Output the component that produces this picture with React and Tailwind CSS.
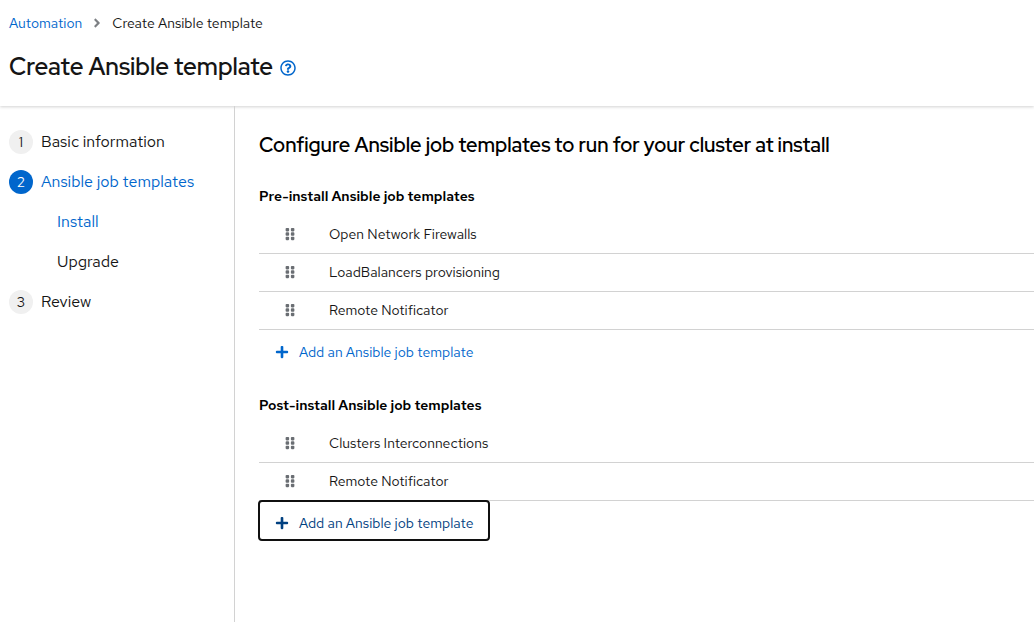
import { FaAngleRight, FaGripVertical, FaPlus, FaRegQuestionCircle } from 'react-icons/fa';

const preInstall = ['Open Network Firewalls', 'LoadBalancers provisioning', 'Remote Notificator'];
const postInstall = ['Clusters Interconnections', 'Remote Notificator'];

function Step({ number, label, current, children }) {
  return (
    <li>
      <button
        type="button"
        aria-current={current ? 'step' : undefined}
        className={`flex items-center gap-2 text-base leading-6 ${current ? 'text-[#0066cc]' : 'text-[#151515]'}`}
      >
        <span
          className={`flex size-6 items-center justify-center rounded-full text-sm ${current ? 'bg-[#0066cc] text-white' : 'bg-[#f0f0f0]'}`}
        >
          {number}
        </span>
        {label}
      </button>
      {children}
    </li>
  );
}

function TemplateSection({ title, items, focused }) {
  return (
    <section>
      <h3 className="text-sm leading-[22px] font-semibold text-black">{title}</h3>
      <ul className="mt-[9px]">
        {items.map((item) => (
          <li key={item} className="flex h-[38px] items-center border-b border-[#d2d2d2] pb-0.5">
            <button type="button" aria-label={`Reorder ${item}`} className="flex w-[70px] pl-6 text-[#6a6e73]">
              <FaGripVertical size={14} />
            </button>
            <span>{item}</span>
          </li>
        ))}
      </ul>
      <button
        type="button"
        className={`flex h-[39px] items-center gap-[10px] rounded-[3px] px-4 pt-1 ${focused ? 'text-[#004080] outline-2 -outline-offset-1 outline-[#101010]' : 'text-[#0066cc]'}`}
      >
        <FaPlus size={14} />
        Add an Ansible job template
      </button>
    </section>
  );
}

export default function App() {
  return (
    <div className="flex min-h-screen flex-col overflow-x-hidden bg-white font-['Red_Hat_Text',Inter,sans-serif] text-sm text-[#151515]">
      <header className="px-[9px] pt-3 pb-[23px] shadow-[0_1px_3px_rgba(3,3,3,0.18)]">
        <nav aria-label="Breadcrumb">
          <ol className="flex items-center leading-[22px]">
            <li><a href="#automation" className="text-[#0066cc]">Automation</a></li>
            <li className="mx-2 flex items-center text-[#7d8084]" aria-hidden="true"><FaAngleRight size={14} /></li>
            <li aria-current="page">Create Ansible template</li>
          </ol>
        </nav>
        <div className="mt-[17px] flex items-center gap-[7px]">
          <h1 className="font-['Red_Hat_Display',Inter,sans-serif] text-2xl leading-8 font-semibold">Create Ansible template</h1>
          <button type="button" aria-label="More information" className="mt-0.5 text-[#0066cc]">
            <FaRegQuestionCircle size={16} />
          </button>
        </div>
      </header>
      <div className="flex flex-1">
        <nav aria-label="Wizard steps" className="w-[235px] shrink-0 border-r border-[#d2d2d2] px-[9px] pt-6">
          <ol className="flex flex-col gap-4">
            <Step number={1} label="Basic information" />
            <Step number={2} label="Ansible job templates" current>
              <ol className="mt-4 flex flex-col gap-4 pl-12 text-base leading-6">
                <li><button type="button" className="block text-[#0066cc]">Install</button></li>
                <li><button type="button" className="block">Upgrade</button></li>
              </ol>
            </Step>
            <Step number={3} label="Review" />
          </ol>
        </nav>
        <main className="min-w-0 flex-1 pt-6 pl-6">
          <h2 className="font-['Red_Hat_Display',Inter,sans-serif] text-xl leading-[30px] font-semibold text-black">Configure Ansible job templates to run for your cluster at install</h2>
          <div className="mt-[25px] flex flex-col gap-[25px]">
            <TemplateSection title="Pre-install Ansible job templates" items={preInstall} />
            <TemplateSection title="Post-install Ansible job templates" items={postInstall} focused />
          </div>
        </main>
      </div>
    </div>
  );
}
